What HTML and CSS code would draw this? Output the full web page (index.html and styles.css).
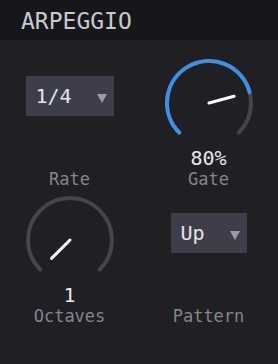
FILE: index.html
```html
<!DOCTYPE html>
<html>
<head>
<meta charset="utf-8">
<link rel="stylesheet" href="styles.css">
</head>
<body>
<div class="panel">
  <div class="header">ARPEGGIO</div>
  <div class="grid">
    <div class="cell">
      <div class="dropdown dd-wide"><span class="dd-text">1/4</span><span class="caret"></span></div>
      <div class="label">Rate</div>
    </div>
    <div class="cell">
      <svg class="knob" width="88" height="88" viewBox="0 0 88 88">
        <path class="track" d="M14.3 73.7 A42 42 0 1 1 73.7 73.7"/>
        <path class="fill" d="M14.3 73.7 A42 42 0 1 1 84.57 33.13"/>
        <line class="pointer" x1="44" y1="44" x2="69.1" y2="37.3"/>
      </svg>
      <div class="value">80%</div>
      <div class="label">Gate</div>
    </div>
    <div class="cell">
      <svg class="knob" width="88" height="88" viewBox="0 0 88 88">
        <path class="track" d="M14.3 73.7 A42 42 0 1 1 73.7 73.7"/>
        <line class="pointer" x1="44" y1="44" x2="25.6" y2="62.4"/>
      </svg>
      <div class="value">1</div>
      <div class="label">Octaves</div>
    </div>
    <div class="cell">
      <div class="dropdown dd-narrow"><span class="dd-text">Up</span><span class="caret"></span></div>
      <div class="label">Pattern</div>
    </div>
  </div>
</div>
</body>
</html>
```

FILE: styles.css
```css
html, body {
  margin: 0;
  padding: 0;
  background: #1f1f24;
}

.panel {
  width: 278px;
  height: 364px;
  background: #1f1f24;
  font-family: "DejaVu Sans Mono", monospace;
}

.header {
  height: 40px;
  box-sizing: border-box;
  padding: 3px 0 0 21px;
  line-height: 37px;
  font-size: 23px;
  color: #c9c9d1;
  background: #16161b;
}

.grid {
  display: grid;
  grid-template-columns: 139px 139px;
  grid-template-rows: 130px 130px;
  row-gap: 7px;
  padding-top: 19px;
}

.cell {
  display: flex;
  flex-direction: column;
  align-items: center;
}

.knob {
  display: block;
  overflow: visible;
}

.track {
  fill: none;
  stroke: #45454f;
  stroke-width: 4;
  stroke-linecap: round;
}

.fill {
  fill: none;
  stroke: #3f8fe6;
  stroke-width: 4;
  stroke-linecap: round;
}

.pointer {
  stroke: #ffffff;
  stroke-width: 3;
  stroke-linecap: round;
}

.value {
  font-size: 20px;
  line-height: 22px;
  color: #e8e8ec;
}

.label {
  margin-top: auto;
  font-size: 17px;
  line-height: 20px;
  color: #85858e;
}

.dropdown {
  margin-top: 17px;
  height: 40px;
  box-sizing: border-box;
  display: flex;
  align-items: center;
  justify-content: space-between;
  padding: 0 7px 0 10px;
  background: #3e3e4b;
}

.dd-wide { width: 88px; }
.dd-narrow { width: 76px; }

.dd-text {
  font-size: 20px;
  color: #e4e4ea;
}

.caret {
  width: 0;
  height: 0;
  margin-top: 4px;
  border-left: 5px solid transparent;
  border-right: 5px solid transparent;
  border-top: 9px solid #9a9aa6;
}
```
